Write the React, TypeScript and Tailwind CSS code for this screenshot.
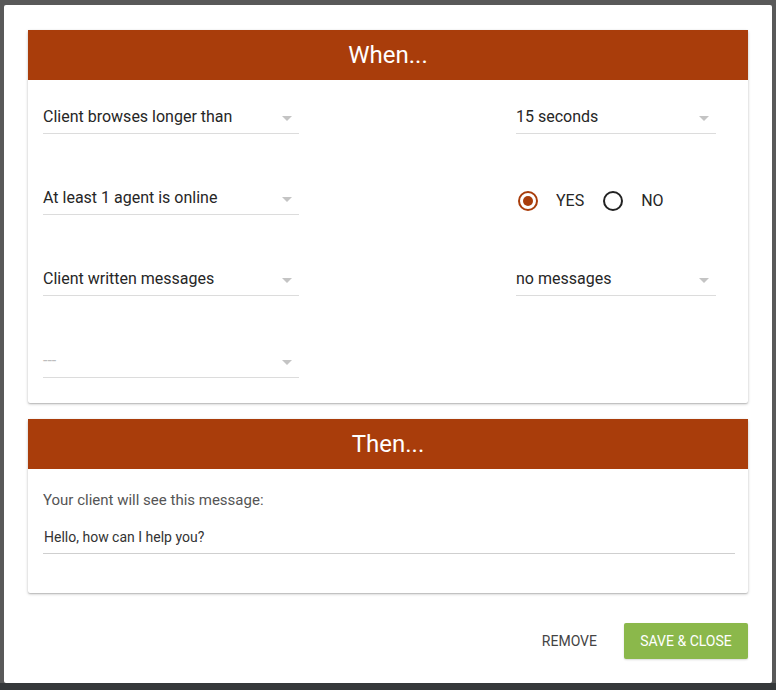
import React, { useState } from 'react';

const Arrow: React.FC = () => (
  <svg width="10" height="5" viewBox="0 0 10 5" className="shrink-0">
    <path d="M0 0 L10 0 L5 5 Z" fill="#c4c4c4" />
  </svg>
);

const Select: React.FC<{ value: string; width: string; placeholder?: boolean }> = ({ value, width, placeholder }) => (
  <div className={`${width} flex items-center justify-between border-b border-[#dcdcdc] pb-[4px]`}>
    <span className={`h-[24px] leading-[24px] text-[16px] ${placeholder ? 'text-[#bdbdbd]' : 'text-[#262626]'}`}>{value}</span>
    <span className="mr-[7px] mt-[2px]">
      <Arrow />
    </span>
  </div>
);

const Radio: React.FC<{ checked: boolean; label: string; onClick: () => void }> = ({ checked, label, onClick }) => (
  <button onClick={onClick} className="flex items-center gap-[18px]">
    <span
      className={`w-[20px] h-[20px] rounded-full border-2 flex items-center justify-center ${
        checked ? 'border-[#a93d0b]' : 'border-[#222]'
      }`}
    >
      {checked && <span className="w-[10px] h-[10px] rounded-full bg-[#a93d0b]" />}
    </span>
    <span className="text-[16px] text-[#262626]">{label}</span>
  </button>
);

const CardHeader: React.FC<{ title: string }> = ({ title }) => (
  <div className="h-[50px] bg-[#a93d0b] flex items-center justify-center">
    <h2 className="text-[24px] text-white font-normal">{title}</h2>
  </div>
);

export default function App() {
  const [online, setOnline] = useState(true);

  return (
    <div
      className="w-[776px] h-[690px] bg-[#595959] border-b-[7px] border-[#35383a] overflow-hidden"
      style={{ fontFamily: 'Roboto, "Liberation Sans", sans-serif' }}
    >
      <div className="ml-[4px] mt-[5px] w-[768px] h-[678px] bg-white rounded-[2px] px-[24px] pt-[25px] flex flex-col">
        {/* trigger conditions */}
        <div className="bg-white shadow-[0_1px_3px_rgba(0,0,0,0.25),0_1px_1px_rgba(0,0,0,0.1)] rounded-[2px]">
          <CardHeader title="When..." />
          <div className="pl-[15px] pr-[32px] pt-[25px] pb-[25px] flex flex-col gap-[52px]">
            <div className="flex justify-between items-end">
              <Select value="Client browses longer than" width="w-[256px]" />
              <Select value="15 seconds" width="w-[200px]" />
            </div>
            <div className="flex justify-between items-end">
              <Select value="At least 1 agent is online" width="w-[256px]" />
              <div className="w-[200px] flex items-center gap-[19px] pl-[2px] pb-[2px]">
                <Radio checked={online} label="YES" onClick={() => setOnline(true)} />
                <Radio checked={!online} label="NO" onClick={() => setOnline(false)} />
              </div>
            </div>
            <div className="flex justify-between items-end">
              <Select value="Client written messages" width="w-[256px]" />
              <Select value="no messages" width="w-[200px]" />
            </div>
            <div className="flex mt-[1px]">
              <Select value="---" width="w-[256px]" placeholder />
            </div>
          </div>
        </div>

        {/* message shown to the client */}
        <div className="mt-[16px] bg-white shadow-[0_1px_3px_rgba(0,0,0,0.25),0_1px_1px_rgba(0,0,0,0.1)] rounded-[2px]">
          <CardHeader title="Then..." />
          <div className="pl-[15px] pr-[13px] pt-[21px] pb-[39px]">
            <p className="text-[15px] leading-[20px] text-[#555]">Your client will see this message:</p>
            <div className="mt-[17px] border-b border-[#cfcfcf] pb-[6px]">
              <span className="block h-[20px] leading-[20px] text-[14px] text-[#333] pl-[1px]">Hello, how can I help you?</span>
            </div>
          </div>
        </div>

        <div className="mt-[30px] flex justify-end items-center gap-[11px]">
          <button className="h-[36px] px-[16px] text-[14px] text-[#444] uppercase">Remove</button>
          <button className="h-[36px] w-[124px] bg-[#8bb84b] text-white text-[14px] uppercase rounded-[2px] shadow-[0_1px_2px_rgba(0,0,0,0.15)]">
            Save &amp; Close
          </button>
        </div>
      </div>
    </div>
  );
}
